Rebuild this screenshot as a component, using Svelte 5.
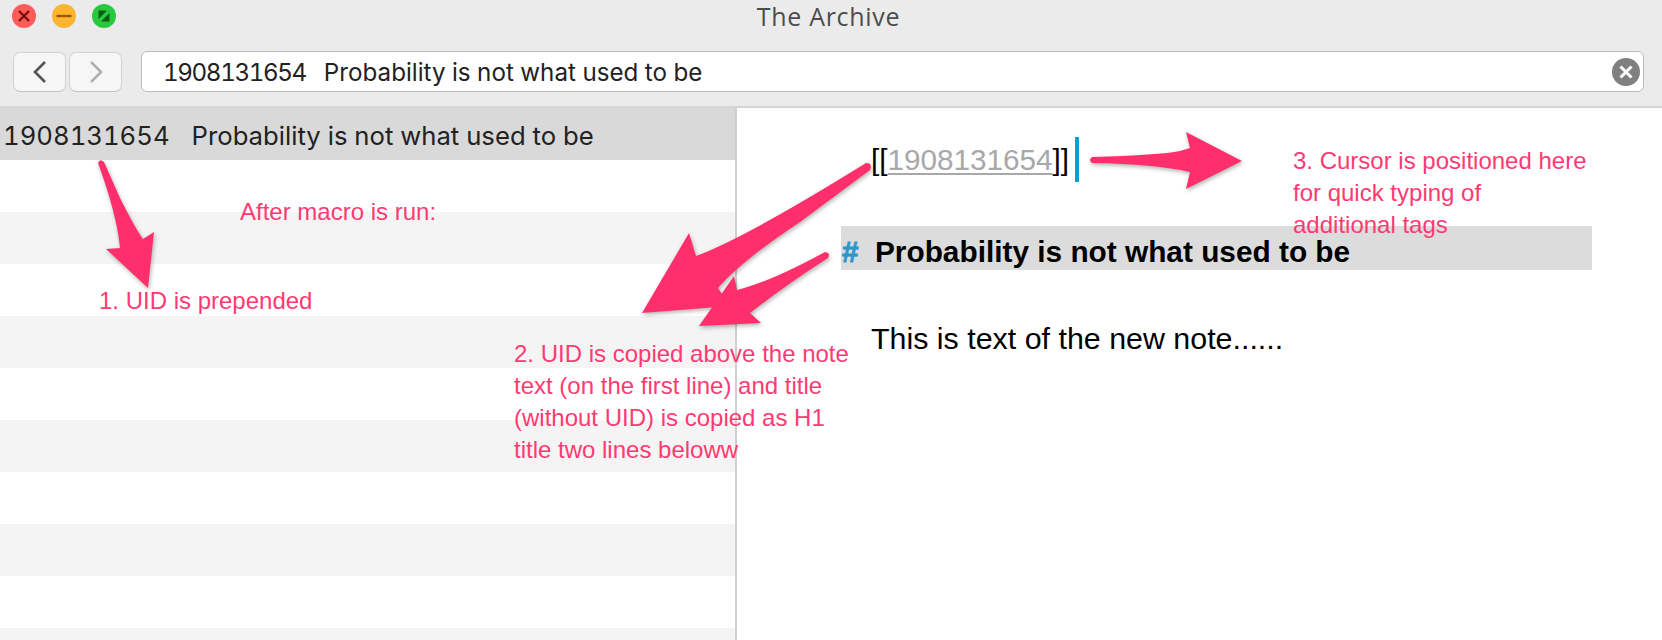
<script>
	const title = "Probability is not what used to be";
	const uid = "1908131654";
	// rows under the selected one, every second is striped
	const rows = [false, true, false, true, false, true, false, true, false, true];

	const arrows = [
		"M98 163 Q100 158 104 162 L120 198 Q135 228 143 239 L154 232 L148 288 L106 249 L120 248 Q117 215 98 163 Z",
		"M866 163 Q873 163 870 170 L800 222 Q740 262 718 288 L730 306 L642 313 L689 233 L696 256 Q745 238 866 163 Z",
		"M825 252 Q831 253 828 258 Q790 282 750 313 L761 323 L699 326 L734 276 L737 290 Q770 282 825 252 Z",
		"M1092 157 Q1160 155 1180 151 L1190 148 L1186 132 L1242 161 L1186 189 L1190 172 Q1155 164 1092 163 Q1088 160 1092 157 Z",
	];
</script>

<div class="window">
	<header class="titlebar">
		<div class="lights">
			<span class="light close">
				<svg viewBox="0 0 24 24" width="24" height="24"><path d="M7 7 L17 17 M17 7 L7 17" stroke="#7a0d0a" stroke-width="2.4" fill="none" /></svg>
			</span>
			<span class="light minimize">
				<svg viewBox="0 0 24 24" width="24" height="24"><path d="M4.5 12 H19.5" stroke="#995700" stroke-width="2.4" fill="none" /></svg>
			</span>
			<span class="light maximize">
				<svg viewBox="0 0 24 24" width="24" height="24">
					<path d="M6.5 6.5 H15 L6.5 15 Z M17.5 9 V17.5 H9 Z" fill="#0a5c12" />
				</svg>
			</span>
		</div>
		<div class="title">The Archive</div>
	</header>

	<div class="toolbar">
		<div class="nav">
			<button class="nav-btn" aria-label="Back">
				<svg viewBox="0 0 20 24" width="20" height="24"><path d="M15 2 L5 12 L15 22" stroke="#555" stroke-width="2.6" fill="none" /></svg>
			</button>
			<button class="nav-btn" aria-label="Forward">
				<svg viewBox="0 0 20 24" width="20" height="24"><path d="M5 2 L15 12 L5 22" stroke="#b0b0b0" stroke-width="2.6" fill="none" /></svg>
			</button>
		</div>
		<div class="search">
			<span class="search-text"><span class="search-uid">{uid}</span><span>{title}</span></span>
			<svg class="clear" viewBox="0 0 28 28" width="28" height="28">
				<circle cx="14" cy="14" r="14" fill="#808080" />
				<path d="M8.5 8.5 L19.5 19.5 M19.5 8.5 L8.5 19.5" stroke="#fff" stroke-width="3" fill="none" />
			</svg>
		</div>
	</div>

	<div class="panes">
		<section class="list">
			<div class="row selected"><span>{uid}</span><span>{title}</span></div>
			{#each rows as striped}
				<div class="row" class:striped></div>
			{/each}
		</section>
		<section class="note">
			<div class="link-line">
				<span>[[<span class="uid">{uid}</span>]]</span>
				<span class="cursor"></span>
			</div>
			<h1 class="heading"><span class="hash">#</span><span class="heading-text">{title}</span></h1>
			<p class="body-text">This is text of the new note......</p>
		</section>
	</div>

	<svg class="arrows" width="1662" height="640" viewBox="0 0 1662 640">
		{#each arrows as d}
			<path {d} fill="#ff2f6b" />
		{/each}
	</svg>

	<div class="note-label one">After macro is run:</div>
	<div class="note-label two">1. UID is prepended</div>
	<div class="note-label three">2. UID is copied above the note<br />text (on the first line) and title<br />(without UID) is copied as H1<br />title two lines beloww</div>
	<div class="note-label four">3. Cursor is positioned here<br />for quick typing of<br />additional tags</div>
</div>

<style>
	:global(body) {
		margin: 0;
		padding: 0;
		background: #fff;
	}

	.window {
		position: relative;
		width: 1662px;
		height: 640px;
		overflow: hidden;
		display: flex;
		flex-direction: column;
		font-family: "Liberation Sans", Arial, sans-serif;
	}

	.titlebar {
		height: 33px;
		flex: none;
		position: relative;
		display: flex;
		align-items: center;
		justify-content: center;
		box-sizing: border-box;
		padding: 0 5px 2px 0;
		background: #ebebeb;
	}

	.lights {
		position: absolute;
		left: 12px;
		top: 4px;
		display: flex;
		gap: 16px;
	}

	.light {
		width: 24px;
		height: 24px;
		border-radius: 50%;
		display: block;
	}

	.light svg {
		display: block;
	}

	.close {
		background: #fc5b57;
	}

	.minimize {
		background: #fdb52f;
	}

	.maximize {
		background: #28c83f;
	}

	.title {
		font-family: "Open Sans", sans-serif;
		font-size: 25px;
		letter-spacing: 0.7px;
		color: #4c4c4c;
	}

	.toolbar {
		height: 75px;
		flex: none;
		box-sizing: border-box;
		padding: 18px 18px 14px 13px;
		display: flex;
		gap: 19px;
		background: #ebebeb;
		border-bottom: 2px solid #d5d5d5;
	}

	.nav {
		display: flex;
		gap: 3px;
		padding-top: 1px;
	}

	.nav-btn {
		width: 53px;
		height: 40px;
		padding: 0;
		display: flex;
		align-items: center;
		justify-content: center;
		background: #f6f6f6;
		border: 1px solid #d2d2d2;
		border-bottom-color: #c4c4c4;
		border-radius: 7px;
	}

	.search {
		flex: 1;
		height: 41px;
		box-sizing: border-box;
		padding: 0 3px 0 21px;
		display: flex;
		align-items: center;
		justify-content: space-between;
		background: #fff;
		border: 1px solid #bcbcbc;
		border-radius: 6px;
	}

	.search-text {
		display: flex;
		gap: 18px;
		padding-top: 2px;
		font-family: "Inter", sans-serif;
		font-feature-settings: "tnum";
		font-size: 24.2px;
		color: #222;
	}

	.search-uid {
		letter-spacing: -1.4px;
	}

	.panes {
		flex: 1;
		min-height: 0;
		display: grid;
		grid-template-columns: 737px 1fr;
	}

	.list {
		border-right: 2px solid #cfcfcf;
		overflow: hidden;
	}

	.row {
		height: 52px;
	}

	.row.selected {
		box-sizing: border-box;
		padding: 2px 0 0 3px;
		display: flex;
		gap: 22px;
		align-items: center;
		background: #d9d9d9;
		font-family: "Inter", sans-serif;
		font-feature-settings: "tnum";
		font-size: 25.7px;
		color: #222;
	}

	.row.striped {
		background: #f4f4f4;
	}

	.note {
		padding: 29px 0 0 104px;
		color: #000;
	}

	.link-line {
		display: flex;
		gap: 6px;
		align-items: center;
		height: 45px;
		margin-left: 30px;
		font-size: 29.7px;
	}

	.uid {
		color: #a8a8a8;
		text-decoration: underline;
		text-underline-offset: 3px;
		text-decoration-thickness: 2px;
	}

	.cursor {
		width: 4px;
		height: 45px;
		background: #119fc9;
	}

	.heading {
		margin: 44px 0 0;
		width: 751px;
		height: 44px;
		display: flex;
		align-items: center;
		background: #dcdcdc;
		font-size: 29.8px;
		font-weight: 700;
	}

	.hash {
		width: 33px;
		padding: 7px 0 0 1px;
		color: #2d96cc;
		-webkit-text-stroke: 0.8px #2d96cc;
	}

	.heading-text {
		padding-top: 7px;
	}

	.body-text {
		margin: 51px 0 0 30px;
		font-size: 30.4px;
	}

	.arrows {
		position: absolute;
		left: 0;
		top: 0;
		filter: drop-shadow(1px 2px 2px rgba(0, 0, 0, 0.3));
	}

	.note-label {
		position: absolute;
		font-size: 24px;
		line-height: 32px;
		color: #ff3a72;
		white-space: nowrap;
	}

	.one {
		left: 240px;
		top: 196px;
	}

	.two {
		left: 99px;
		top: 285px;
	}

	.three {
		left: 514px;
		top: 338px;
	}

	.four {
		left: 1293px;
		top: 145px;
	}
</style>
